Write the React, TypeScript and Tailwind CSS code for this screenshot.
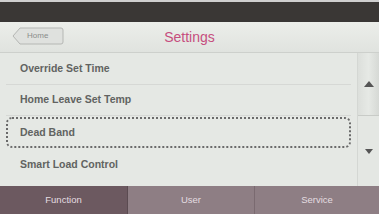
import React from "react";

const rows = ["Override Set Time", "Home Leave Set Temp", "Dead Band", "Smart Load Control"];

export default function App() {
  return (
    <div
      className="w-[379px] h-[214px] overflow-hidden flex flex-col bg-[#e5e8e4]"
      style={{ fontFamily: '"Liberation Sans", Arial, sans-serif' }}
    >
      {/* top bar */}
      <div className="h-[22px] shrink-0 bg-[#3a3735] border-t-2 border-[#cfcfcf]" />
      {/* header */}
      <div className="h-[31px] shrink-0 relative flex items-center justify-center bg-gradient-to-b from-[#eceeea] to-[#e0e3df] border-b border-[#cdd0cc]">
        <div className="absolute left-[12px] top-[5px] h-[18px] w-[52px] flex items-center">
          <svg width="52" height="18" viewBox="0 0 52 18" className="absolute inset-0">
            <path d="M8 1 H49 Q51 1 51 3 V15 Q51 17 49 17 H8 L1 9 Z" fill="#dfe1de" stroke="#b5b7b4" strokeWidth="1" />
          </svg>
          <span className="relative pl-[15px] text-[8px] text-[#8a8c8a]">Home</span>
        </div>
        <span className="text-[14px] text-[#c64e7e]">Settings</span>
      </div>
      {/* list area */}
      <div className="flex-1 flex min-h-0">
        <div className="flex-1 flex flex-col px-[6px] pt-[1px]">
          {rows.map((r, i) => (
            <div
              key={r}
              className={
                i === 2
                  ? "h-[31px] flex items-center pl-[12px] border-2 border-dotted border-[#6a6a6a] rounded-[6px] text-[10.5px] font-bold text-[#616361] my-[1px]"
                  : "h-[31px] flex items-center pl-[14px] text-[10.5px] font-bold text-[#616361] border-b border-[#d6d8d5] last:border-b-0"
              }
            >
              {r}
            </div>
          ))}
        </div>
        <div className="w-[22px] flex flex-col bg-[#e4e7e3] border-l border-[#d4d7d3]">
          <div className="h-[63px] flex items-center justify-center bg-gradient-to-r from-[#dcdfdb] via-[#e6e9e5] to-[#d6d9d5] border-b border-[#c8cbc7]">
            <svg width="10" height="6" viewBox="0 0 10 6"><path d="M5 0 L10 6 H0 Z" fill="#555" /></svg>
          </div>
          <div className="flex-1 flex items-center justify-center">
            <svg width="8" height="5" viewBox="0 0 8 5"><path d="M0 0 H8 L4 5 Z" fill="#555" /></svg>
          </div>
        </div>
      </div>
      {/* tabs */}
      <div className="h-[28px] shrink-0 flex text-[9.5px] text-[#e4dde0]">
        <div className="w-[128px] flex items-center justify-center bg-[#6c5960] border-r border-[#5b4b51]">Function</div>
        <div className="w-[127px] flex items-center justify-center bg-[#8e7e84] border-r border-[#7a6a70]">User</div>
        <div className="flex-1 flex items-center justify-center bg-[#8e7e84]">Service</div>
      </div>
    </div>
  );
}
